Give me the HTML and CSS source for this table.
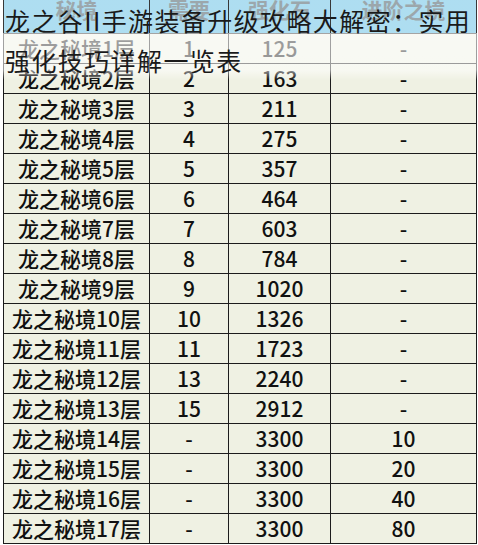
FILE: index.html
```html
<!DOCTYPE html>
<html lang="zh">
<head>
<meta charset="utf-8">
<title>龙之谷II手游装备升级攻略</title>
<link rel="stylesheet" href="styles.css">
</head>
<body>
<div class="page">
  <div class="sheet">
    <div class="cell head">秘境</div>
    <div class="cell head">需要</div>
    <div class="cell head">强化石</div>
    <div class="cell head">进阶之境</div>

    <div class="cell">龙之秘境1层</div><div class="cell">1</div><div class="cell">125</div><div class="cell">-</div>
    <div class="cell">龙之秘境2层</div><div class="cell">2</div><div class="cell">163</div><div class="cell">-</div>
    <div class="cell">龙之秘境3层</div><div class="cell">3</div><div class="cell">211</div><div class="cell">-</div>
    <div class="cell">龙之秘境4层</div><div class="cell">4</div><div class="cell">275</div><div class="cell">-</div>
    <div class="cell">龙之秘境5层</div><div class="cell">5</div><div class="cell">357</div><div class="cell">-</div>
    <div class="cell">龙之秘境6层</div><div class="cell">6</div><div class="cell">464</div><div class="cell">-</div>
    <div class="cell">龙之秘境7层</div><div class="cell">7</div><div class="cell">603</div><div class="cell">-</div>
    <div class="cell">龙之秘境8层</div><div class="cell">8</div><div class="cell">784</div><div class="cell">-</div>
    <div class="cell">龙之秘境9层</div><div class="cell">9</div><div class="cell">1020</div><div class="cell">-</div>
    <div class="cell">龙之秘境10层</div><div class="cell">10</div><div class="cell">1326</div><div class="cell">-</div>
    <div class="cell">龙之秘境11层</div><div class="cell">11</div><div class="cell">1723</div><div class="cell">-</div>
    <div class="cell">龙之秘境12层</div><div class="cell">13</div><div class="cell">2240</div><div class="cell">-</div>
    <div class="cell">龙之秘境13层</div><div class="cell">15</div><div class="cell">2912</div><div class="cell">-</div>
    <div class="cell">龙之秘境14层</div><div class="cell">-</div><div class="cell">3300</div><div class="cell">10</div>
    <div class="cell">龙之秘境15层</div><div class="cell">-</div><div class="cell">3300</div><div class="cell">20</div>
    <div class="cell">龙之秘境16层</div><div class="cell">-</div><div class="cell">3300</div><div class="cell">40</div>
    <div class="cell">龙之秘境17层</div><div class="cell">-</div><div class="cell">3300</div><div class="cell">80</div>
  </div>
  <h1 class="title">龙之谷II手游装备升级攻略大解密：实用<br>强化技巧详解一览表</h1>
</div>
</body>
</html>
```
FILE: styles.css
```css
html, body {
  margin: 0;
  padding: 0;
  background: #ffffff;
}
.page {
  position: relative;
  width: 478px;
  height: 545px;
  overflow: hidden;
  font-family: "Noto Sans CJK SC", "Noto Sans", sans-serif;
}
.sheet {
  display: grid;
  grid-template-columns: 145px 78px 101px 145px;
  grid-template-rows: 44px;
  grid-auto-rows: 29px;
  gap: 1px;
  padding: 1px;
  margin: -12px 0 0 3px;
  width: max-content;
  background: #1c1c1c;
}
.cell {
  background: #eff1e3;
  color: #111111;
  font-size: 21px;
  font-weight: 500;
  line-height: 29px;
  text-align: center;
  white-space: nowrap;
}
.head {
  height: 44px;
  background: #a3d9ef;
  color: #8e9ba1;
  font-weight: bold;
  font-size: 21px;
  line-height: 24px;
  padding-top: 8px;
  box-sizing: border-box;
}
.title {
  position: absolute;
  top: 0;
  left: 0;
  width: 478px;
  height: 80px;
  margin: 0;
  padding: 0 0 0 5px;
  box-sizing: border-box;
  font-size: 25px;
  font-weight: normal;
  letter-spacing: 1.4px;
  line-height: 40px;
  white-space: nowrap;
  color: #1a1a1a;
  background: linear-gradient(to bottom,
    rgba(255,255,255,0.12) 0,
    rgba(255,255,255,0.12) 33px,
    rgba(255,255,255,0.6) 33px,
    rgba(255,255,255,0.55) 70px,
    rgba(255,255,255,0) 80px);
}
```
